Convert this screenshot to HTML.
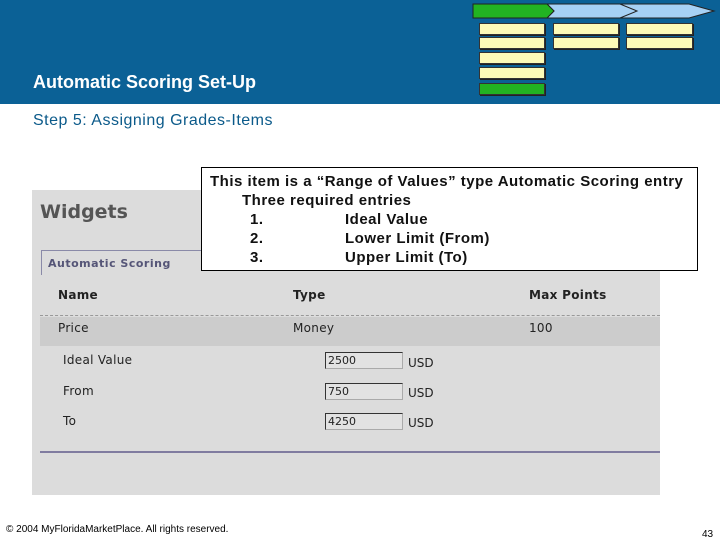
<!DOCTYPE html>
<html><head><meta charset="utf-8"><style>
*{margin:0;padding:0;box-sizing:border-box}
body{width:720px;height:540px;position:relative;background:#fff;font-family:"Liberation Sans",sans-serif;overflow:hidden}
.a{position:absolute}
.hdr{left:0;top:0;width:720px;height:104px;background:#0b6196}
.box{background:#fdfbb8;border:1px solid #333;font-size:3px;color:#333;text-align:center;height:12px;box-shadow:1px 1px 0 #222}
.v{font-family:"DejaVu Sans",sans-serif;font-size:12px;color:#222;letter-spacing:0.3px}
.inp{width:78px;height:17px;background:#e2e2e2;border:1px solid #aaa;border-top-color:#333;border-left-color:#333;font-size:11px;padding-left:2px;line-height:15px;font-family:"DejaVu Sans",sans-serif;color:#222}
.usd{font-family:"DejaVu Sans",sans-serif;font-size:12px;color:#222}
</style></head><body>
<div class="a hdr"></div>
<svg class="a" style="left:472px;top:3px" width="246" height="17">
<polygon points="1,1 148,1 155,8 148,15 1,15" fill="#a6d1f5" stroke="#222"/>
<polygon points="148,1 217,1 242,8 217,15 148,15 155,8" fill="#a6d1f5" stroke="#222"/>
<polygon points="75,1 148,1 165,8 148,15 75,15 82,8" fill="#a6d1f5" stroke="#222"/>
<polygon points="1,1 75,1 82,8 75,15 1,15" fill="#22b322" stroke="#222"/>
</svg>
<div class="a box" style="left:479px;top:23px;width:66px"></div>
<div class="a box" style="left:479px;top:37px;width:66px"></div>
<div class="a box" style="left:479px;top:52px;width:66px"></div>
<div class="a box" style="left:479px;top:67px;width:66px"></div>
<div class="a box" style="left:479px;top:83px;width:66px;background:#22b322"></div>
<div class="a box" style="left:553px;top:23px;width:66px"></div>
<div class="a box" style="left:553px;top:37px;width:66px"></div>
<div class="a box" style="left:626px;top:23px;width:67px"></div>
<div class="a box" style="left:626px;top:37px;width:67px"></div>
<div class="a" style="left:33px;top:72px;font-size:18px;font-weight:bold;color:#fff">Automatic Scoring Set-Up</div>
<div class="a" style="left:33px;top:112px;font-size:16px;color:#0b5a8a;letter-spacing:0.5px">Step 5: Assigning Grades-Items</div>

<div class="a" style="left:32px;top:190px;width:628px;height:305px;background:#dcdcdc"></div>
<div class="a" style="left:40px;top:201px;font-size:19px;font-weight:bold;color:#555;font-family:'DejaVu Sans',sans-serif">Widgets</div>
<div class="a" style="left:41px;top:250px;width:170px;height:25px;border-left:1px solid #8a8aa8;border-top:1px solid #8a8aa8"></div>
<div class="a" style="left:48px;top:257px;font-size:11px;font-weight:bold;color:#555577;font-family:'DejaVu Sans',sans-serif;letter-spacing:0.5px">Automatic Scoring</div>
<div class="a v" style="left:58px;top:288px;font-weight:bold">Name</div>
<div class="a v" style="left:293px;top:288px;font-weight:bold">Type</div>
<div class="a v" style="left:529px;top:288px;font-weight:bold">Max Points</div>
<div class="a" style="left:40px;top:315px;width:620px;border-top:1px dashed #999"></div>
<div class="a" style="left:40px;top:317px;width:620px;height:29px;background:#cccccc"></div>
<div class="a v" style="left:58px;top:321px">Price</div>
<div class="a v" style="left:293px;top:321px">Money</div>
<div class="a v" style="left:529px;top:321px">100</div>
<div class="a v" style="left:63px;top:353px">Ideal Value</div>
<div class="a v" style="left:63px;top:384px">From</div>
<div class="a v" style="left:63px;top:414px">To</div>
<div class="a inp" style="left:325px;top:352px">2500</div>
<div class="a inp" style="left:325px;top:383px">750</div>
<div class="a inp" style="left:325px;top:413px">4250</div>
<div class="a usd" style="left:408px;top:356px">USD</div>
<div class="a usd" style="left:408px;top:386px">USD</div>
<div class="a usd" style="left:408px;top:416px">USD</div>
<div class="a" style="left:40px;top:451px;width:620px;height:2px;background:#807ca0"></div>

<div class="a" style="left:201px;top:167px;width:497px;height:104px;background:#fff;border:1px solid #000;font-size:15px;font-weight:bold;line-height:19px;color:#111;padding:4px 0 0 8px;letter-spacing:0.5px">
<div>This item is a “Range of Values” type Automatic Scoring entry</div>
<div style="padding-left:32px">Three required entries</div>
<div style="padding-left:40px">1.<span class="a" style="left:143px">Ideal Value</span></div>
<div style="padding-left:40px">2.<span class="a" style="left:143px">Lower Limit (From)</span></div>
<div style="padding-left:40px">3.<span class="a" style="left:143px">Upper Limit (To)</span></div>
</div>

<div class="a" style="left:6px;top:524px;font-size:10px;color:#000">© 2004 MyFloridaMarketPlace. All rights reserved.</div>
<div class="a" style="left:702px;top:529px;font-size:10px;color:#000">43</div>
</body></html>
